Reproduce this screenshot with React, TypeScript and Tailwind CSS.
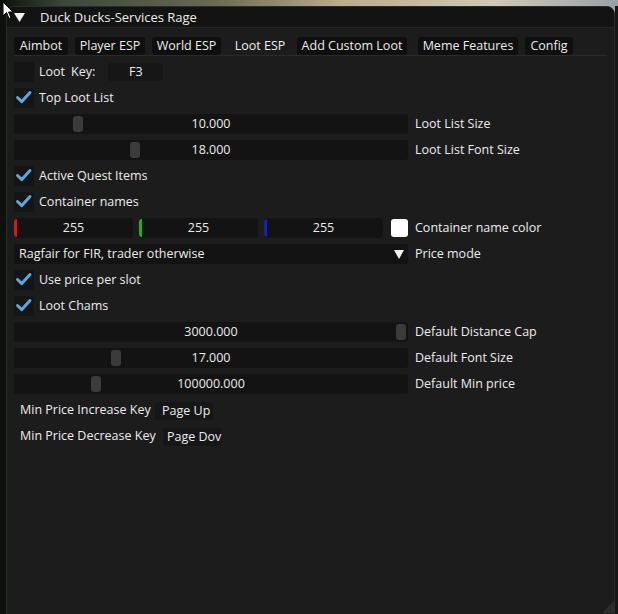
import React from 'react'

// ImGui-like "Loot ESP" page of the menu window

type Tab = { name: string; cls: string; active?: boolean }

const tabs: Tab[] = [
  { name: 'Aimbot', cls: 'w-[54px]' },
  { name: 'Player ESP', cls: 'w-[70px] ml-[7px]' },
  { name: 'World ESP', cls: 'w-[69px] ml-[7px]' },
  { name: 'Loot ESP', cls: 'w-[62px] ml-[8px]', active: true },
  { name: 'Add Custom Loot', cls: 'w-[110px] ml-[6px]' },
  { name: 'Meme Features', cls: 'w-[100px] ml-[11px]' },
  { name: 'Config', cls: 'w-[48px] ml-[7px]' },
]

function Check() {
  return (
    <svg width="20" height="20" viewBox="0 0 20 20" fill="none">
      <path d="M3.5 9.5 L7.8 13.6 L16 4.6" stroke="#5aa9e0" strokeWidth="3" strokeLinecap="round" strokeLinejoin="round" />
    </svg>
  )
}

function Checkbox({ label, checked = true }: { label: string; checked?: boolean }) {
  return (
    <div className="flex items-center h-[20px] gap-[5px]">
      <div className="w-[20px] h-[20px] rounded-[3px] bg-[#151515] flex items-center justify-center">
        {checked && <Check />}
      </div>
      <span>{label}</span>
    </div>
  )
}

function Slider({ value, label, grab }: { value: string; label: string; grab: number }) {
  return (
    <div className="flex items-center h-[20px] gap-[7px]">
      <div className="relative w-[394px] h-[20px] rounded-[3px] bg-[#131313] flex items-center justify-center">
        <div className="absolute top-[2px] w-[10px] h-[16px] rounded-[3px] bg-[#3b3b3b]" style={{ left: grab }} />
        <span className="relative">{value}</span>
      </div>
      <span>{label}</span>
    </div>
  )
}

function ColorField({ bar }: { bar: string }) {
  return (
    <div className="relative w-[119px] h-[20px] rounded-[3px] bg-[#131313] flex items-center justify-center">
      <span className={`absolute left-0 top-[1px] bottom-[1px] w-[3px] rounded-l-[3px] ${bar}`} />
      <span>255</span>
    </div>
  )
}

export default function App() {
  return (
    <div className="relative w-[618px] h-[614px] overflow-hidden bg-[linear-gradient(to_right,#0a100a,#3c463a_10%,#6b6a55_35%,#b8ae8c_55%,#cfc9b8_80%,#9aa0a8)] pt-[6px] pl-[6px] pr-[3px] font-['Open_Sans','Noto_Sans',sans-serif] text-[12.5px] leading-none text-[#ececec] whitespace-nowrap">
      <div className="absolute left-0 top-[6px] bottom-0 w-[6px] bg-[#0c120c]" />
      <div className="absolute right-0 top-[6px] bottom-0 w-[3px] bg-[#161616]" />

      {/* window */}
      <div className="relative h-[640px] rounded-t-[8px] border border-[#2c2c2c] bg-[#1c1c1c] overflow-hidden">
        {/* title bar */}
        <div className="flex items-center h-[21px] bg-[#131313] border-b border-[#262626]">
          <svg className="ml-[7px]" width="11" height="9" viewBox="0 0 11 9">
            <path d="M0 0 H11 L5.5 9 Z" fill="#f2f2f2" />
          </svg>
          <span className="ml-[15px] text-[13px]">Duck Ducks-Services Rage</span>
        </div>

        <div className="pl-[7px] pt-[9px]">
          {/* tabs */}
          <div className="flex items-center h-[18px]">
            {tabs.map((t) => (
              <div
                key={t.name}
                className={`${t.cls} h-[18px] rounded-[3px] flex items-center justify-center ${t.active ? '' : 'bg-[#0f0f0f]'}`}
              >
                {t.name}
              </div>
            ))}
          </div>
          <div className="h-px bg-[#2a2a2a] mr-[7px]" />

          <div className="flex flex-col gap-[6px] mt-[6px]">
            {/* loot key */}
            <div className="flex items-center h-[20px]">
              <div className="w-[20px] h-[20px] rounded-[3px] bg-[#151515]" />
              <span className="ml-[5px]">Loot</span>
              <span className="ml-[6px]">Key:</span>
              <div className="ml-[13px] w-[55px] h-[18px] rounded-[3px] bg-[#161616] flex items-center justify-center">F3</div>
            </div>

            <Checkbox label="Top Loot List" />
            <Slider value="10.000" label="Loot List Size" grab={59} />
            <Slider value="18.000" label="Loot List Font Size" grab={116} />
            <Checkbox label="Active Quest Items" />
            <Checkbox label="Container names" />

            {/* container color */}
            <div className="flex items-center h-[20px]">
              <ColorField bar="bg-[#d41919]" />
              <div className="ml-[6px]"><ColorField bar="bg-[#16b816]" /></div>
              <div className="ml-[6px]"><ColorField bar="bg-[#1c1cc4]" /></div>
              <div className="ml-[8px] w-[17px] h-[18px] rounded-[3px] bg-white" />
              <span className="ml-[7px]">Container name color</span>
            </div>

            {/* price mode */}
            <div className="flex items-center h-[20px] gap-[7px]">
              <div className="w-[394px] h-[20px] rounded-[3px] bg-[#131313] flex items-center justify-between pl-[5px] pr-[4px]">
                <span>Ragfair for FIR, trader otherwise</span>
                <svg width="10" height="9" viewBox="0 0 10 9">
                  <path d="M0 0 H10 L5 9 Z" fill="#f2f2f2" />
                </svg>
              </div>
              <span>Price mode</span>
            </div>

            <Checkbox label="Use price per slot" />
            <Checkbox label="Loot Chams" />
            <Slider value="3000.000" label="Default Distance Cap" grab={382} />
            <Slider value="17.000" label="Default Font Size" grab={97} />
            <Slider value="100000.000" label="Default Min price" grab={77} />

            {/* hotkeys */}
            <div className="flex items-center h-[20px]">
              <span className="w-[141px] pl-[6px]">Min Price Increase Key</span>
              <div className="mt-[2px] w-[58px] h-[18px] rounded-[3px] bg-[#161616] flex items-center pl-[7px]">Page Up</div>
            </div>
            <div className="flex items-center h-[20px]">
              <span className="w-[149px] pl-[6px]">Min Price Decrease Key</span>
              <div className="mt-[2px] w-[59px] h-[18px] rounded-[3px] bg-[#161616] flex items-center pl-[4px]">Page Dov</div>
            </div>
          </div>
        </div>

        {/* resize grip */}
        <svg className="absolute right-0 top-[594px]" width="12" height="12" viewBox="0 0 12 12">
          <path d="M12 0 V12 H0 Z" fill="#2c2c2c" />
        </svg>
      </div>

      {/* mouse cursor */}
      <svg className="absolute left-[2px] top-[1px]" width="12" height="19" viewBox="0 0 12 19">
        <path d="M1 1 V15 L4.5 11.5 L7 17.5 L9 16.6 L6.6 11 H11 Z" fill="#ffffff" stroke="#000000" strokeWidth="1" strokeLinejoin="round" />
      </svg>
    </div>
  )
}
